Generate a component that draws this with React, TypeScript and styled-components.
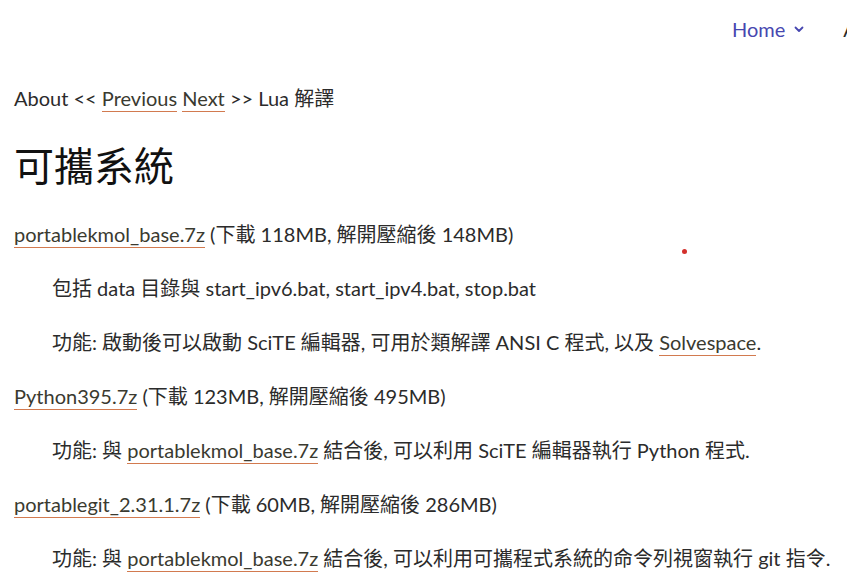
import React from "react";
import styled, { createGlobalStyle } from "styled-components";

const Global = createGlobalStyle`
  html, body { margin: 0; padding: 0; background: #fff; overflow: hidden; }
  body { font-family: Lato, "Noto Sans CJK TC", sans-serif; color: #2b2b2b; }
`;

const Page = styled.div`
  width: 847px;
  height: 576px;
  position: relative;
  overflow: hidden;
`;

const Header = styled.header`
  display: flex;
  gap: 39px;
  padding: 15px 0 0 732px;
  height: 40px;
  white-space: nowrap;
`;

const NavItem = styled.a<{ $active?: boolean }>`
  display: flex;
  align-items: center;
  gap: 9px;
  height: 28px;
  font-size: 20px;
  color: ${(p) => (p.$active ? "#4747b0" : "#2b2b2b")};
  text-decoration: none;
`;

const Main = styled.main`
  padding: 0 14px;
`;

const Crumbs = styled.p`
  font-size: 20px;
  margin: 29px 0 0;
  line-height: 28px;
`;

const Link = styled.a`
  color: #3a3a30;
  text-decoration: none;
  border-bottom: 1px solid #d27a4f;
  padding-bottom: 1px;
`;

const Title = styled.h1`
  font-family: "Noto Sans CJK TC", sans-serif;
  font-weight: 400;
  font-size: 40px;
  line-height: 50px;
  margin: 27px 0 28px;
  color: #111;
`;

const Para = styled.p<{ $indent?: boolean }>`
  font-size: 20px;
  line-height: 34px;
  height: 34px;
  margin: 0 0 20px;
  padding-left: ${(p) => (p.$indent ? "38px" : "0")};
  white-space: nowrap;
`;

const Dot = styled.span`
  position: absolute;
  left: 682px;
  top: 249px;
  width: 5px;
  height: 5px;
  border-radius: 50%;
  background: #d3302c;
`;

export default function App() {
  return (
    <Page>
      <Global />
      <Header>
        <NavItem $active href="#">
          Home
          <svg width="10" height="7" viewBox="0 0 10 7" fill="none">
            <path d="M1.5 1.5 L5 5 L8.5 1.5" stroke="#4747b0" strokeWidth="1.8" strokeLinecap="round" strokeLinejoin="round" />
          </svg>
        </NavItem>
        <NavItem href="#">About</NavItem>
      </Header>
      <Main>
        <Crumbs>
          About &lt;&lt; <Link href="#">Previous</Link> <Link href="#">Next</Link> &gt;&gt; Lua 解譯
        </Crumbs>
        <Title>可攜系統</Title>
        <Para>
          <Link href="#">portablekmol_base.7z</Link> (下載 118MB, 解開壓縮後 148MB)
        </Para>
        <Para $indent>包括 data 目錄與 start_ipv6.bat, start_ipv4.bat, stop.bat</Para>
        <Para $indent>
          功能: 啟動後可以啟動 SciTE 編輯器, 可用於類解譯 ANSI C 程式, 以及 <Link href="#">Solvespace</Link>.
        </Para>
        <Para>
          <Link href="#">Python395.7z</Link> (下載 123MB, 解開壓縮後 495MB)
        </Para>
        <Para $indent>
          功能: 與 <Link href="#">portablekmol_base.7z</Link> 結合後, 可以利用 SciTE 編輯器執行 Python 程式.
        </Para>
        <Para>
          <Link href="#">portablegit_2.31.1.7z</Link> (下載 60MB, 解開壓縮後 286MB)
        </Para>
        <Para $indent>
          功能: 與 <Link href="#">portablekmol_base.7z</Link> 結合後, 可以利用可攜程式系統的命令列視窗執行 git 指令.
        </Para>
      </Main>
      <Dot />
    </Page>
  );
}
